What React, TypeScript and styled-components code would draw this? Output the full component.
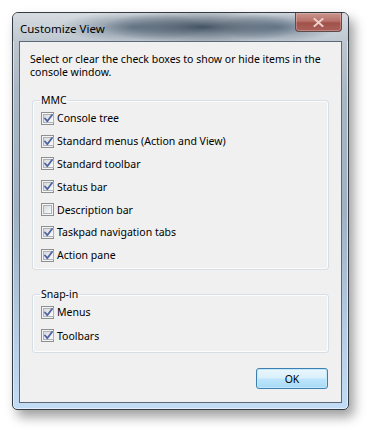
import styled, { createGlobalStyle } from 'styled-components';

const GlobalStyle = createGlobalStyle`
	html, body {
		margin: 0;
		background: #ffffff;
	}
	body {
		font-family: 'Noto Sans', 'Open Sans', sans-serif;
		font-size: 10.5px;
		color: #000;
	}
`;

const Page = styled.div`
	width: 369px;
	height: 432px;
	padding: 12px 0 0 12px;
	box-sizing: border-box;
`;

const Window = styled.div`
	width: 337px;
	height: 398px;
	box-sizing: border-box;
	display: flex;
	flex-direction: column;
	border: 1px solid #343b43;
	border-radius: 6px 6px 5px 5px;
	padding: 0 6px 6px;
	background: linear-gradient(
		180deg,
		#c9cfd5 0%,
		#aab7c4 20%,
		#9fb2c4 50%,
		#b5cce3 80%,
		#c2dcf6 100%
	);
	box-shadow:
		inset 0 0 0 1px rgba(255, 255, 255, 0.55),
		5px 7px 12px rgba(0, 0, 0, 0.38);
`;

const TitleBar = styled.div`
	height: 28px;
	display: flex;
	justify-content: space-between;
	align-items: flex-start;
	margin: 0 -6px;
	padding: 0 6px 0 7px;
	border-radius: 5px 5px 0 0;
	background:
		radial-gradient(ellipse 100px 17px at 190px 14px, rgba(45, 62, 80, 0.85), transparent),
		radial-gradient(ellipse 75px 15px at 120px 14px, rgba(75, 95, 115, 0.65), transparent),
		radial-gradient(ellipse 60px 15px at 265px 14px, rgba(65, 88, 112, 0.65), transparent),
		linear-gradient(180deg, #d6dbe0 0%, #bfc8d1 100%);
`;

const Title = styled.span`
	margin-top: 9px;
	font-size: 11.5px;
	line-height: 14px;
	color: #000;
`;

const CloseButton = styled.div`
	width: 47px;
	height: 19px;
	box-sizing: border-box;
	display: flex;
	align-items: center;
	justify-content: center;
	border: 1px solid #5e4a48;
	border-top: none;
	border-radius: 0 0 4px 4px;
	background: linear-gradient(180deg, #c9968f 0%, #b77169 45%, #a0524a 55%, #a9605a 100%);
	box-shadow: inset 0 0 0 1px rgba(255, 220, 215, 0.3);
`;

const Client = styled.div`
	flex: 1;
	display: flex;
	flex-direction: column;
	border: 1px solid #5c6873;
	background: #f0f0f0;
	padding: 11px 12px 0;
`;

const Intro = styled.p`
	margin: 0 -2px;
	font-size: 10.5px;
	line-height: 13px;
`;

const Group = styled.fieldset<{ $top: number; $bottom: number }>`
	margin: 0;
	margin-top: ${(p) => p.$top}px;
	padding: 0 0 ${(p) => p.$bottom}px 8px;
	border: 1px solid #d5dfe5;
	border-radius: 3px;
	box-shadow: inset 0 0 0 1px rgba(255, 255, 255, 0.8);
	min-width: 0;
`;

const Legend = styled.legend`
	padding: 0 1px;
	margin-left: -1px;
	font-size: 10.5px;
	line-height: 13px;
`;

const Row = styled.label<{ $height: number }>`
	display: flex;
	align-items: center;
	height: ${(p) => p.$height}px;
	gap: 3px;
	font-size: 10.5px;
`;

const Box = styled.span`
	width: 13px;
	height: 13px;
	box-sizing: border-box;
	border: 1px solid #8e8f8f;
	background: #f4f4f4;
	padding: 1px;
	display: flex;
	flex-shrink: 0;
`;

const BoxInner = styled.span`
	flex: 1;
	display: flex;
	align-items: center;
	justify-content: center;
	border: 1px solid #aeb3b9;
	background: linear-gradient(135deg, #d7dadd 0%, #e9ebed 55%, #fbfbfb 100%);
`;

const Footer = styled.div`
	display: flex;
	justify-content: flex-end;
	margin-top: 15px;
	padding-right: 1px;
`;

const OkButton = styled.button`
	width: 72px;
	height: 21px;
	border: 1px solid #3c7fb1;
	border-radius: 3px;
	background: linear-gradient(180deg, #eaf6fd 0%, #d9f0fc 48%, #bee6fd 52%, #a7d9f5 100%);
	box-shadow: inset 0 0 0 1px #c4e8fa;
	font-family: 'Noto Sans', 'Open Sans', sans-serif;
	font-size: 10.5px;
	color: #000;
	padding: 0;
`;

function Check({ checked }: { checked: boolean }) {
	return (
		<Box>
			<BoxInner>
				{checked && (
					<svg width="9" height="9" viewBox="0 0 9 9">
						<path
							d="M1 4.5 L3.3 7.2 L8 1"
							fill="none"
							stroke="#4f63a0"
							strokeWidth="1.8"
							strokeLinecap="round"
							strokeLinejoin="round"
						/>
					</svg>
				)}
			</BoxInner>
		</Box>
	);
}

const mmcItems: [string, boolean][] = [
	['Console tree', true],
	['Standard menus (Action and View)', true],
	['Standard toolbar', true],
	['Status bar', true],
	['Description bar', false],
	['Taskpad navigation tabs', true],
	['Action pane', true],
];

const snapInItems: [string, boolean][] = [
	['Menus', true],
	['Toolbars', true],
];

export default function App() {
	return (
		<>
			<GlobalStyle />
			<Page>
				<Window>
					<TitleBar>
						<Title>Customize View</Title>
						<CloseButton>
							<svg width="11" height="9" viewBox="0 0 11 9">
								<path
									d="M1.5 1 L9.5 8 M9.5 1 L1.5 8"
									stroke="#eccfcb"
									strokeWidth="2"
									strokeLinecap="square"
								/>
							</svg>
						</CloseButton>
					</TitleBar>
					<Client>
						<Intro>
							Select or clear the check boxes to show or hide items in the
							console window.
						</Intro>
						<Group $top={15} $bottom={2}>
							<Legend>MMC</Legend>
							{mmcItems.map(([label, checked]) => (
								<Row key={label} $height={22.8}>
									<Check checked={checked} />
									{label}
								</Row>
							))}
						</Group>
						<Group $top={18} $bottom={5}>
							<Legend>Snap-in</Legend>
							{snapInItems.map(([label, checked]) => (
								<Row key={label} $height={23.4}>
									<Check checked={checked} />
									{label}
								</Row>
							))}
						</Group>
						<Footer>
							<OkButton>OK</OkButton>
						</Footer>
					</Client>
				</Window>
			</Page>
		</>
	);
}
